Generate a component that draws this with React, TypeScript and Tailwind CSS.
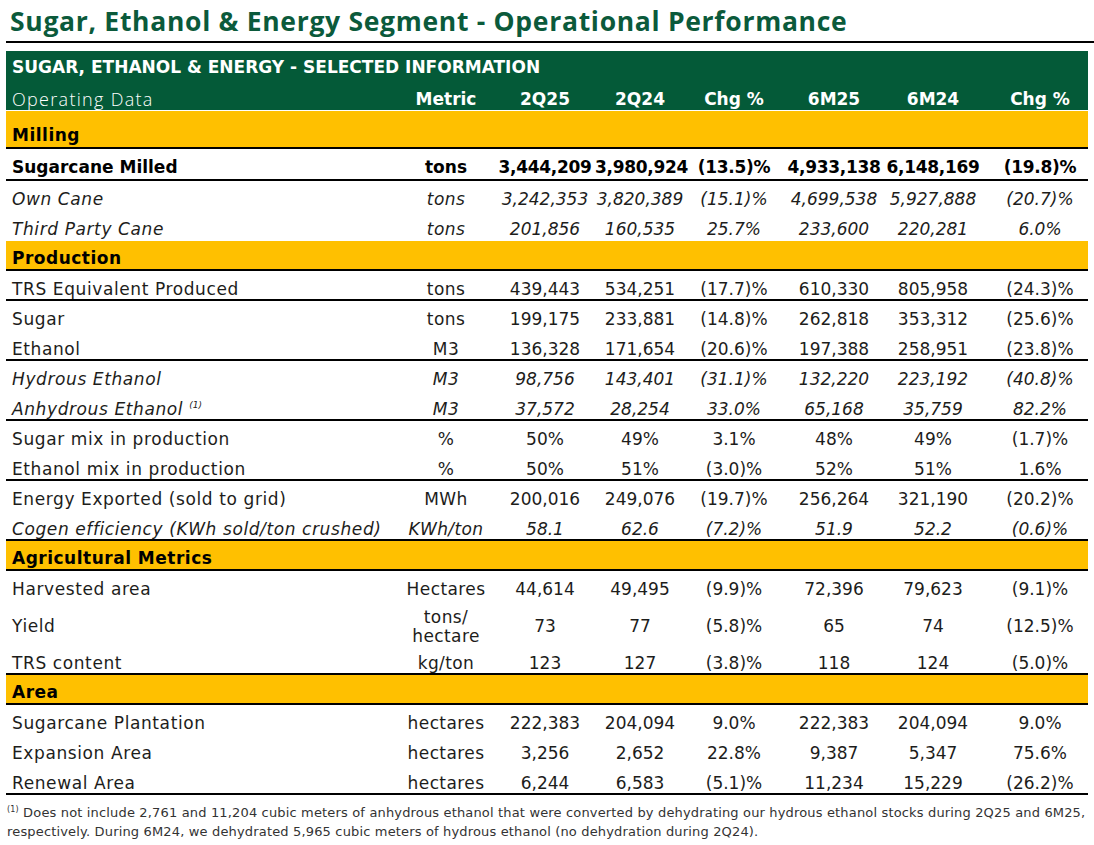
import React from "react";

type Row = {
  kind: "section" | "row";
  label: React.ReactNode;
  metric?: React.ReactNode;
  vals?: string[];
  bold?: boolean;
  italic?: boolean;
  line?: boolean;
  h?: string;
  pt?: string;
};

const rows: Row[] = [
  { kind: "section", label: "Milling", h: "h-[38px]" },
  { kind: "row", label: "Sugarcane Milled", metric: "tons", vals: ["3,444,209", "3,980,924", "(13.5)%", "4,933,138", "6,148,169", "(19.8)%"], bold: true, line: true, h: "h-[32px]", pt: "pt-[6px]" },
  { kind: "row", label: "Own Cane", metric: "tons", vals: ["3,242,353", "3,820,389", "(15.1)%", "4,699,538", "5,927,888", "(20.7)%"], italic: true },
  { kind: "row", label: "Third Party Cane", metric: "tons", vals: ["201,856", "160,535", "25.7%", "233,600", "220,281", "6.0%"], italic: true },
  { kind: "section", label: "Production" },
  { kind: "row", label: "TRS Equivalent Produced", metric: "tons", vals: ["439,443", "534,251", "(17.7)%", "610,330", "805,958", "(24.3)%"], line: true },
  { kind: "row", label: "Sugar", metric: "tons", vals: ["199,175", "233,881", "(14.8)%", "262,818", "353,312", "(25.6)%"] },
  { kind: "row", label: "Ethanol", metric: "M3", vals: ["136,328", "171,654", "(20.6)%", "197,388", "258,951", "(23.8)%"], line: true },
  { kind: "row", label: "Hydrous Ethanol", metric: "M3", vals: ["98,756", "143,401", "(31.1)%", "132,220", "223,192", "(40.8)%"], italic: true },
  {
    kind: "row",
    label: (
      <>
        Anhydrous Ethanol{" "}
        <span className="text-[9px] tracking-normal relative -top-[7px]">(1)</span>
      </>
    ),
    metric: "M3",
    vals: ["37,572", "28,254", "33.0%", "65,168", "35,759", "82.2%"],
    italic: true,
    line: true,
  },
  { kind: "row", label: "Sugar mix in production", metric: "%", vals: ["50%", "49%", "3.1%", "48%", "49%", "(1.7)%"] },
  { kind: "row", label: "Ethanol mix in production", metric: "%", vals: ["50%", "51%", "(3.0)%", "52%", "51%", "1.6%"], line: true },
  { kind: "row", label: "Energy Exported (sold to grid)", metric: "MWh", vals: ["200,016", "249,076", "(19.7)%", "256,264", "321,190", "(20.2)%"] },
  { kind: "row", label: "Cogen efficiency (KWh sold/ton crushed)", metric: "KWh/ton", vals: ["58.1", "62.6", "(7.2)%", "51.9", "52.2", "(0.6)%"], italic: true, line: true },
  { kind: "section", label: "Agricultural Metrics" },
  { kind: "row", label: "Harvested area", metric: "Hectares", vals: ["44,614", "49,495", "(9.9)%", "72,396", "79,623", "(9.1)%"] },
  {
    kind: "row",
    label: "Yield",
    metric: (
      <div className="flex flex-col items-center">
        <span className="leading-[19px]">tons/</span>
        <span className="leading-[19px]">hectare</span>
      </div>
    ),
    vals: ["73", "77", "(5.8)%", "65", "74", "(12.5)%"],
    h: "h-[44px]",
    pt: "pt-[7px]",
  },
  { kind: "row", label: "TRS content", metric: "kg/ton", vals: ["123", "127", "(3.8)%", "118", "124", "(5.0)%"], line: true },
  { kind: "section", label: "Area" },
  { kind: "row", label: "Sugarcane Plantation", metric: "hectares", vals: ["222,383", "204,094", "9.0%", "222,383", "204,094", "9.0%"] },
  { kind: "row", label: "Expansion Area", metric: "hectares", vals: ["3,256", "2,652", "22.8%", "9,387", "5,347", "75.6%"] },
  { kind: "row", label: "Renewal Area", metric: "hectares", vals: ["6,244", "6,583", "(5.1)%", "11,234", "15,229", "(26.2)%"], line: true },
];

const grid = "grid grid-cols-[391px_98px_100px_90px_98px_102px_96px_107px]";
const body = { fontFamily: '"DejaVu Sans", "Open Sans", sans-serif' };
const titleFont = { fontFamily: '"Open Sans", "DejaVu Sans", sans-serif' };

export default function App() {
  return (
    <div className="w-[1094px] h-[845px] bg-white text-[#1d1d1b]" style={body}>
      <div className="ml-[6px] w-[1088px] h-[43px] border-b-2 border-black pl-[4px] pt-[2px] flex items-center">
        <h1 className="text-[26.5px] font-bold text-[#0b5a3b] leading-none tracking-[0.7px]" style={titleFont}>
          Sugar, Ethanol &amp; Energy Segment - Operational Performance
        </h1>
      </div>
      <div className="ml-[6px] w-[1082px] mt-[8px]">
        <div className="h-[59px] bg-[#045a38] text-white flex flex-col">
          <div className="h-[32px] pt-[2px] pl-[6px] flex items-center text-[17px] font-bold">
            SUGAR, ETHANOL &amp; ENERGY - SELECTED INFORMATION
          </div>
          <div className={`${grid} h-[27px] pt-[3px] items-center text-[17px]`}>
            <div className="pl-[6px] font-light" style={titleFont}>
              <span className="text-[18px] tracking-[1.3px]">Operating Data</span>
            </div>
            {["Metric", "2Q25", "2Q24", "Chg %", "6M25", "6M24"].map((t) => (
              <div key={t} className="text-center font-bold text-[17px]">
                {t}
              </div>
            ))}
            <div className="text-center font-bold text-[17px] pl-[11px]">Chg %</div>
          </div>
        </div>
        <div className="h-[1px]" />
        {rows.map((r, i) => {
          if (r.kind === "section") {
            return (
              <div
                key={i}
                className={`${r.h ?? "h-[30px]"} bg-[#ffc000] border-b-2 border-black pl-[6px] flex ${r.h ? "items-end" : "items-center pt-[6px]"} text-[17px] font-bold text-black tracking-[0.5px]`}
              >
                <span className={r.h ? "leading-[24px]" : "leading-[22px]"}>{r.label}</span>
              </div>
            );
          }
          return (
            <div
              key={i}
              className={`${grid} ${r.h ?? "h-[30px]"} items-center ${r.pt ?? "pt-[6px]"} text-[17px] ${r.line ? "border-b-2 border-black" : ""} ${r.bold ? "font-bold text-black" : ""} ${r.italic ? "italic" : ""}`}
            >
              <div className={`pl-[6px] whitespace-nowrap ${r.bold ? "" : "tracking-[0.6px]"}`}>{r.label}</div>
              <div className={`text-center whitespace-nowrap ${r.bold ? "" : "tracking-[0.4px]"}`}>{r.metric}</div>
              {r.vals!.map((v, j) => (
                <div key={j} className={`text-center whitespace-nowrap ${r.bold ? "tracking-[-0.3px]" : ""} ${j === 5 ? "pl-[11px]" : ""}`}>
                  {v}
                </div>
              ))}
            </div>
          );
        })}
        <div className="pt-[9px] pl-[1px] text-[13px] leading-[17px] tracking-[0.16px] text-[#333] whitespace-nowrap">
          <span className="text-[8px] relative -top-[5px]">(1)</span> Does not include 2,761 and 11,204 cubic meters of anhydrous ethanol that were converted by dehydrating our hydrous ethanol stocks during 2Q25 and 6M25,
          <br />
          respectively. During 6M24, we dehydrated 5,965 cubic meters of hydrous ethanol (no dehydration during 2Q24).
        </div>
      </div>
    </div>
  );
}
